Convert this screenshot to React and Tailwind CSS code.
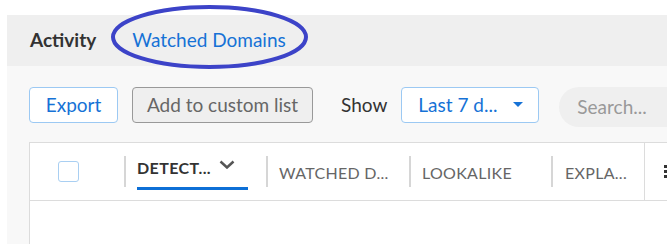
import React from "react";

export default function App() {
  return (
    <div className="relative w-[667px] h-[244px] overflow-hidden bg-white font-['Lato',sans-serif]">
      <div className="pt-[15px] pl-[7px]">
        <div className="flex h-[51px] items-center bg-[#efefef] pl-[23px]">
          <span className="text-[19px] font-bold text-[#333]">Activity</span>
          <span className="ml-[36px] text-[19px] text-[#1672d6]">Watched Domains</span>
        </div>
        <div className="h-[200px] bg-[#f8f8f8] pl-[22px] pt-[21px]">
          <div className="flex items-start">
            <button className="flex h-[36px] w-[89px] shrink-0 items-center justify-center rounded-[4px] border border-[#9cc9f3] bg-white text-[19px] text-[#1672d6]">
              Export
            </button>
            <button className="ml-[14px] flex h-[36px] w-[181px] shrink-0 items-center justify-center rounded-[4px] border border-[#999] bg-[#efefef] text-[19px] text-[#666]">
              Add to custom list
            </button>
            <span className="ml-[28px] flex h-[36px] shrink-0 items-center text-[19px] text-[#333]">Show</span>
            <button className="ml-[14px] flex h-[36px] w-[138px] shrink-0 items-center rounded-[4px] border border-[#9cc9f3] bg-white pl-[16px] text-[19px] text-[#1672d6]">
              <span>Last 7 d...</span>
              <svg className="ml-[16px]" width="10" height="6" viewBox="0 0 10 6">
                <path d="M0 0 L10 0 L5 5 Z" fill="#1672d6" />
              </svg>
            </button>
            <div className="ml-[20px] flex h-[40px] w-[140px] shrink-0 items-center rounded-full bg-[#efefef] pl-[18px] text-[19px] text-[#999]">
              Search...
            </div>
          </div>
          <div className="mt-[15px] h-[200px] w-[700px] border-l border-t border-[#dcdcdc] bg-white">
            <div className="flex h-[58px] items-center border-b border-[#dcdcdc]">
              <div className="flex w-[94px] shrink-0 items-center pl-[28px]">
                <div className="h-[21px] w-[21px] rounded-[3px] border border-[#a9cff2] bg-white" />
              </div>
              <div className="flex w-[142px] shrink-0 items-center self-stretch">
                <div className="h-[31px] w-[2px] bg-[#d6d6d6]" />
                <div className="ml-[11px] flex h-full flex-col justify-center">
                  <div className="flex items-center pt-[2px]">
                    <span className="text-[16px] font-bold tracking-[0.4px] text-[#333]">DETECT...</span>
                    <svg className="ml-[8px] mb-[6px]" width="16" height="9" viewBox="0 0 16 9">
                      <path d="M1.5 1.5 L8 7.5 L14.5 1.5" fill="none" stroke="#555" strokeWidth="2.5" />
                    </svg>
                  </div>
                  <div className="mt-[7px] h-[3px] w-[111px] bg-[#0d6fd6]" />
                </div>
              </div>
              <div className="flex w-[143px] shrink-0 items-center">
                <div className="h-[31px] w-[2px] bg-[#d6d6d6]" />
                <span className="ml-[11px] mt-[2px] text-[16px] tracking-[0.3px] text-[#666]">WATCHED D...</span>
              </div>
              <div className="flex w-[142px] shrink-0 items-center">
                <div className="h-[31px] w-[2px] bg-[#d6d6d6]" />
                <span className="ml-[11px] mt-[2px] text-[16px] tracking-[0.3px] text-[#666]">LOOKALIKE</span>
              </div>
              <div className="flex w-[93px] shrink-0 items-center self-stretch">
                <div className="h-[31px] w-[2px] self-center bg-[#d6d6d6]" />
                <span className="ml-[12px] mt-[2px] self-center text-[16px] tracking-[0.3px] text-[#666]">EXPLA...</span>
              </div>
              <div className="flex w-[40px] shrink-0 items-center self-stretch border-l border-[#dcdcdc] pl-[19px]">
                <div className="flex flex-col gap-[2px]">
                  <div className="h-[3px] w-[3px] bg-[#333]" />
                  <div className="h-[3px] w-[3px] bg-[#333]" />
                  <div className="h-[3px] w-[3px] bg-[#333]" />
                </div>
              </div>
            </div>
          </div>
        </div>
      </div>
      <svg className="absolute left-0 top-0" width="667" height="244" viewBox="0 0 667 244">
        <ellipse cx="209.5" cy="37" rx="96.5" ry="30" fill="none" stroke="#3c43c8" strokeWidth="4" />
      </svg>
    </div>
  );
}
